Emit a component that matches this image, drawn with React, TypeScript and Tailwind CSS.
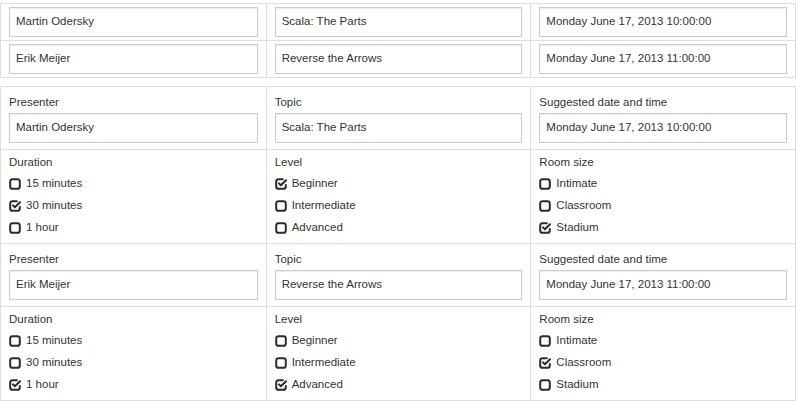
import React from 'react';

type Talk = {
  presenter: string;
  topic: string;
  date: string;
  duration: string;
  level: string;
  room: string;
};

const talks: Talk[] = [
  {
    presenter: 'Martin Odersky',
    topic: 'Scala: The Parts',
    date: 'Monday June 17, 2013 10:00:00',
    duration: '30 minutes',
    level: 'Beginner',
    room: 'Stadium',
  },
  {
    presenter: 'Erik Meijer',
    topic: 'Reverse the Arrows',
    date: 'Monday June 17, 2013 11:00:00',
    duration: '1 hour',
    level: 'Advanced',
    room: 'Classroom',
  },
];

const durations = ['15 minutes', '30 minutes', '1 hour'];
const levels = ['Beginner', 'Intermediate', 'Advanced'];
const rooms = ['Intimate', 'Classroom', 'Stadium'];

const CheckIcon = ({ checked }: { checked: boolean }) =>
  checked ? (
    <svg width="12" height="12" viewBox="0 0 12 12" fill="none" stroke="#2b2b2b" strokeWidth="2" strokeLinecap="round" strokeLinejoin="round">
      <path d="M7.8 1.2H3.6A2.4 2.4 0 0 0 1.2 3.6v4.8a2.4 2.4 0 0 0 2.4 2.4h4.8a2.4 2.4 0 0 0 2.4-2.4V7" />
      <path d="M4 5.4l1.9 1.9L11 2.2" />
    </svg>
  ) : (
    <svg width="12" height="12" viewBox="0 0 12 12" fill="none" stroke="#2b2b2b" strokeWidth="2">
      <rect x="1.2" y="1.2" width="9.6" height="9.6" rx="2.4" />
    </svg>
  );

const Field = ({ value }: { value: string }) => (
  <div className="h-[30px] border border-[#cccccc] bg-white px-[6px] flex items-center text-[#333] shadow-[inset_0_1px_1px_rgba(0,0,0,0.075)]">
    {value}
  </div>
);

const Options = ({ label, options, value }: { label: string; options: string[]; value: string }) => (
  <div className="px-[8px] pt-[5px] pb-[4px]">
    <div className="leading-[14px] mb-[4px]">{label}</div>
    {options.map((o) => (
      <div key={o} className="h-[22px] flex items-center gap-[5px]">
        <CheckIcon checked={o === value} />
        <span>{o}</span>
      </div>
    ))}
  </div>
);

const Labeled = ({ label, value }: { label: string; value: string }) => (
  <div className="px-[8px] pt-[8px] pb-[6px]">
    <div className="leading-[14px] mb-[4px]">{label}</div>
    <Field value={value} />
  </div>
);

export default function App() {
  return (
    <div className="w-[796px] bg-white text-[11.5px] text-[#333] pt-[3px]" style={{ fontFamily: '"Liberation Sans", Arial, sans-serif' }}>
      {/* summary */}
      <div className="border border-[#dddddd]">
        {talks.map((t, i) => (
          <div key={t.presenter} className={`grid grid-cols-3 ${i > 0 ? 'border-t border-[#dddddd]' : ''}`}>
            <div className="px-[8px] py-[3px]"><Field value={t.presenter} /></div>
            <div className="px-[8px] py-[3px] border-l border-[#dddddd]"><Field value={t.topic} /></div>
            <div className="px-[8px] py-[3px] border-l border-[#dddddd]"><Field value={t.date} /></div>
          </div>
        ))}
      </div>

      {/* detail */}
      <div className="border border-[#dddddd] mt-[8px]">
        {talks.map((t, i) => (
          <React.Fragment key={t.presenter}>
            <div className={`grid grid-cols-3 ${i > 0 ? 'border-t border-[#dddddd]' : ''}`}>
              <Labeled label="Presenter" value={t.presenter} />
              <div className="border-l border-[#dddddd]"><Labeled label="Topic" value={t.topic} /></div>
              <div className="border-l border-[#dddddd]"><Labeled label="Suggested date and time" value={t.date} /></div>
            </div>
            <div className="grid grid-cols-3 border-t border-[#dddddd]">
              <Options label="Duration" options={durations} value={t.duration} />
              <div className="border-l border-[#dddddd]"><Options label="Level" options={levels} value={t.level} /></div>
              <div className="border-l border-[#dddddd]"><Options label="Room size" options={rooms} value={t.room} /></div>
            </div>
          </React.Fragment>
        ))}
      </div>
    </div>
  );
}
